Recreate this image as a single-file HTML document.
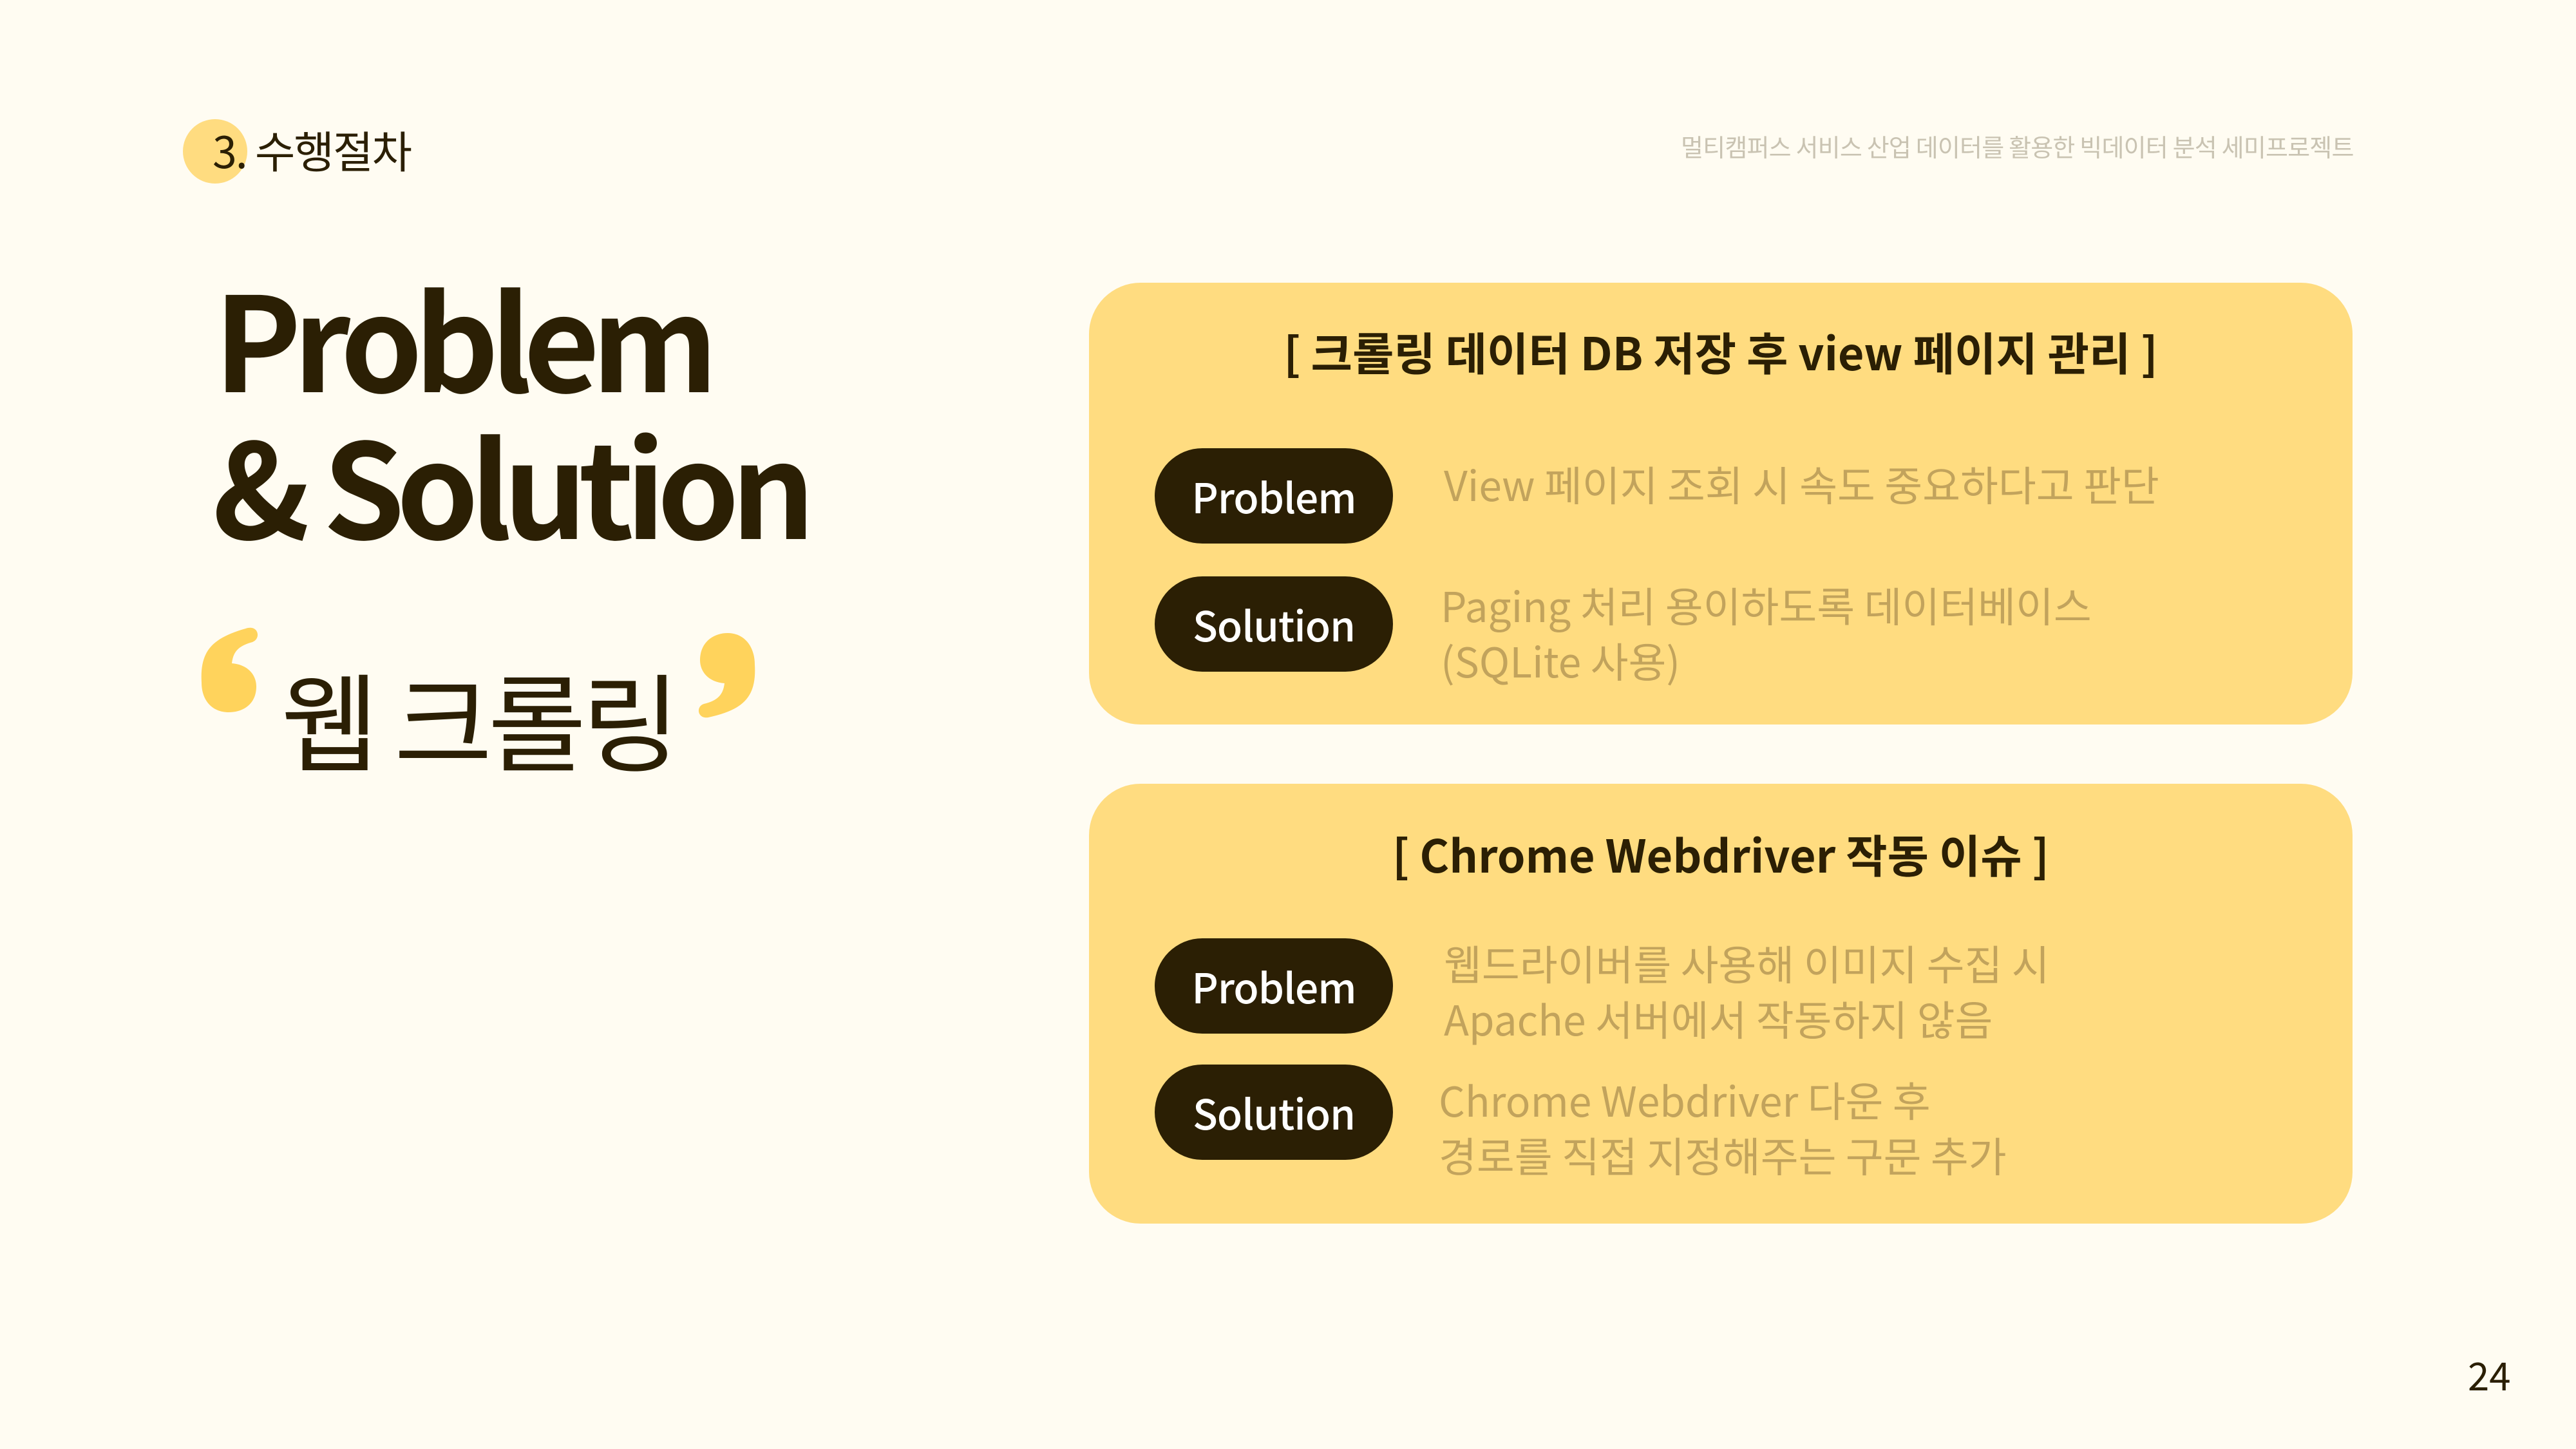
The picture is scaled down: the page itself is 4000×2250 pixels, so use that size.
<!DOCTYPE html>
<html><head><meta charset="utf-8"><style>
*{margin:0;padding:0;box-sizing:border-box}
body{width:4000px;height:2250px;background:#fffcf2;position:relative;overflow:hidden;font-family:"Noto Sans CJK KR","Liberation Sans",sans-serif;color:#2b1f04}
.a{position:absolute;white-space:nowrap;line-height:1}
.card{position:absolute;left:1691px;width:1962px;background:#ffdc80;border-radius:80px}
.title{position:absolute;left:0;width:100%;text-align:center;font-size:70px;font-weight:700;letter-spacing:0px;line-height:1}
.pill{position:absolute;left:102px;width:370px;height:148px;border-radius:74px;background:#2b1f04;color:#fff;font-size:64px;font-weight:500;display:flex;align-items:center;justify-content:center;letter-spacing:-1px}
.txt{position:absolute;font-size:64px;color:#c2a35c;line-height:86px;white-space:nowrap;letter-spacing:0px}
</style></head><body>
<div class="a" style="left:284px;top:185px;width:100px;height:100px;border-radius:50%;background:#ffdc80"></div>
<div class="a" style="left:330px;top:198px;font-size:68px;letter-spacing:-2px">3. 수행절차</div>
<div class="a" style="left:2610px;top:208px;font-size:38px;color:#c9c3b2;letter-spacing:-0.8px">멀티캠퍼스 서비스 산업 데이터를 활용한 빅데이터 분석 세미프로젝트</div>
<div class="a" style="left:332px;top:418px;font-size:204px;font-weight:700;letter-spacing:-13px">Problem</div>
<div class="a" style="left:330px;top:646px;font-size:204px;font-weight:700;letter-spacing:-13px">&amp; Solution</div>
<svg class="a" style="left:0;top:0" width="1300" height="1200" viewBox="0 0 1300 1200">
<path d="M313 1060 C310 1010 330 990 385 975 C402 972 405 992 392 997 C370 1003 362 1012 360 1030 C385 1032 398 1048 398 1066 C398 1093 378 1106 355 1106 C330 1106 313 1088 313 1060 Z" fill="#ffd35c"/>
<path d="M1172 1032 C1175 1082 1155 1102 1100 1114 C1083 1117 1080 1097 1093 1093 C1115 1088 1123 1078 1125 1061 C1100 1059 1087 1043 1087 1025 C1087 998 1107 983 1130 983 C1155 983 1172 1003 1172 1032 Z" fill="#ffd35c"/>
</svg>
<div class="a" style="left:436px;top:1030px;font-size:166px;letter-spacing:-7px">웹 크롤링</div>

<div class="card" style="top:439px;height:686px">
<div class="title" style="top:72px">[ 크롤링 데이터 DB 저장 후 view 페이지 관리 ]</div>
<div class="pill" style="top:257px">Problem</div>
<div class="pill" style="top:456px">Solution</div>
<div class="txt" style="left:551px;top:269px">View 페이지 조회 시 속도 중요하다고 판단</div>
<div class="txt" style="left:546px;top:457px">Paging 처리 용이하도록 데이터베이스<br>(SQLite 사용)</div>
</div>

<div class="card" style="top:1217px;height:683px">
<div class="title" style="top:74px">[ Chrome Webdriver 작동 이슈 ]</div>
<div class="pill" style="top:240px">Problem</div>
<div class="pill" style="top:436px">Solution</div>
<div class="txt" style="left:551px;top:235px">웹드라이버를 사용해 이미지 수집 시<br>Apache 서버에서 작동하지 않음</div>
<div class="txt" style="left:543px;top:447px">Chrome Webdriver 다운 후<br>경로를 직접 지정해주는 구문 추가</div>
</div>

<div class="a" style="left:3832px;top:2104px;font-size:60px">24</div>
</body></html>
